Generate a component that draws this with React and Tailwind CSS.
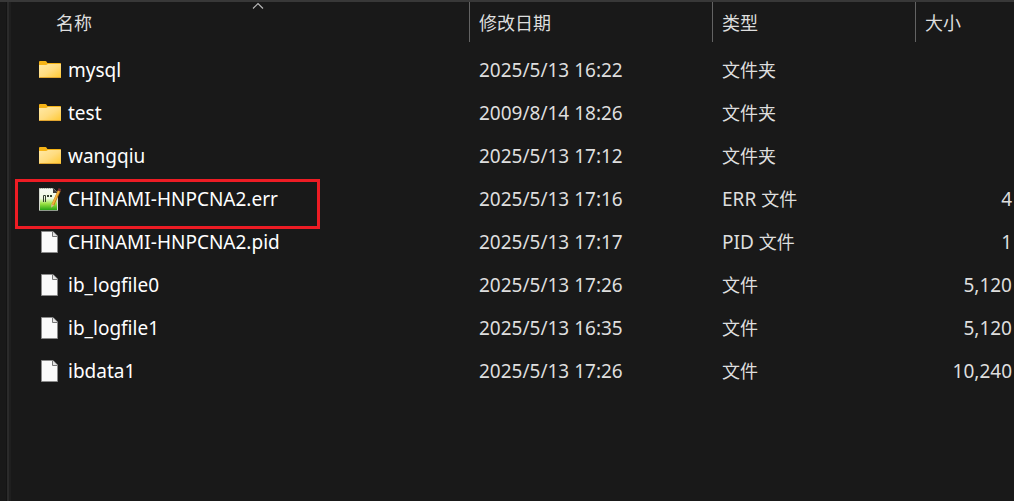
import React from 'react';

const files = [
  { name: 'mysql', icon: 'folder', date: '2025/5/13 16:22', kind: '', type: '文件夹', size: '' },
  { name: 'test', icon: 'folder', date: '2009/8/14 18:26', kind: '', type: '文件夹', size: '' },
  { name: 'wangqiu', icon: 'folder', date: '2025/5/13 17:12', kind: '', type: '文件夹', size: '' },
  { name: 'CHINAMI-HNPCNA2.err', icon: 'notepad', date: '2025/5/13 17:16', kind: 'ERR ', type: '文件', size: '4', marked: true },
  { name: 'CHINAMI-HNPCNA2.pid', icon: 'file', date: '2025/5/13 17:17', kind: 'PID ', type: '文件', size: '1' },
  { name: 'ib_logfile0', icon: 'file', date: '2025/5/13 17:26', kind: '', type: '文件', size: '5,120' },
  { name: 'ib_logfile1', icon: 'file', date: '2025/5/13 16:35', kind: '', type: '文件', size: '5,120' },
  { name: 'ibdata1', icon: 'file', date: '2025/5/13 17:26', kind: '', type: '文件', size: '10,240' },
];

function FolderIcon() {
  return (
    <svg width="24" height="26" viewBox="0 0 24 26" aria-hidden="true">
      <defs>
        <linearGradient id="folderFront" x1="0" y1="0" x2="1" y2="1">
          <stop offset="0" stopColor="#ffe9a6" />
          <stop offset="0.5" stopColor="#ffdc80" />
          <stop offset="1" stopColor="#ffc830" />
        </linearGradient>
      </defs>
      <path d="M1 4Q1 3 2 3H7.5Q8.2 3 8.6 3.8L9.4 5H22.4Q23 5 23 5.6V10H1Z" fill="#f5b316" />
      <path d="M1 7H7.6Q8.4 7 9 6.4Q9.4 6 10 6H23V19.4Q23 20 22.4 20H1.6Q1 20 1 19.4Z" fill="url(#folderFront)" />
      <path d="M1.3 19.5H22.7" stroke="#e0a530" strokeWidth="1" />
    </svg>
  );
}

function FileIcon() {
  return (
    <svg width="24" height="26" viewBox="0 0 24 26" aria-hidden="true">
      <path d="M3.5 1.5H15L19.5 6V22.5H3.5Z" fill="#fafafa" stroke="#8a8a8a" />
      <path d="M14.5 1.5V6.5H19.5" fill="#e4e4e4" stroke="#777" />
    </svg>
  );
}

function NotepadIcon() {
  return (
    <svg width="24" height="26" viewBox="0 0 24 26" aria-hidden="true">
      <defs>
        <linearGradient id="padPage" x1="0" y1="0" x2="0" y2="1">
          <stop offset="0" stopColor="#f8fbf4" />
          <stop offset="0.45" stopColor="#eefae0" />
          <stop offset="0.7" stopColor="#98e040" />
          <stop offset="1" stopColor="#1fa012" />
        </linearGradient>
      </defs>
      <path d="M1.5 1.5H15L19.5 6V23.5H1.5Z" fill="url(#padPage)" stroke="#d4d8d0" />
      <path d="M1 23.5H20" stroke="#8f9a8c" />
      <path d="M2 1.5H15" stroke="#a4aca0" strokeDasharray="1 1" />
      <path d="M15 1.5L20 6H15Z" fill="#3a3a3a" />
      <path d="M5.5 15V8.5H7.5V15" fill="none" stroke="#33402e" />
      <path d="M9 9H11M12 9H14" stroke="#33402e" strokeWidth="2" />
      <path d="M21.3 3.5L14.8 18" stroke="#c07a14" strokeWidth="3" />
      <path d="M21 3.5L14.6 17.6" stroke="#f2b440" strokeWidth="1.8" />
      <path d="M21 4L22 1.6" stroke="#7d3030" strokeWidth="2.8" />
      <path d="M13.3 17L16 18.4L13 20.8Z" fill="#d9b98a" />
    </svg>
  );
}

const icons = { folder: FolderIcon, file: FileIcon, notepad: NotepadIcon };

function HeaderCell({ children }) {
  return (
    <th scope="col" className="border-l border-[#636363] p-0 text-left font-normal">
      <button type="button" className="block h-10 w-full pt-[2px] pl-[9px] text-left">{children}</button>
    </th>
  );
}

export default function App() {
  return (
    <div className="flex min-h-screen overflow-hidden border-t-2 border-[#383838] bg-[#191919] font-['Noto_Sans','Noto_Sans_CJK_SC',sans-serif] text-[19px] text-[#dedede]">
      <div className="w-[7px] shrink-0 border-r border-[#141414]" />
      <div className="w-1 shrink-0 border-r-2 border-[#1f1f1f] bg-[#2b2b2b]" />
      <main className="min-w-0 flex-1">
        <table className="w-full table-fixed border-separate border-spacing-0">
          <colgroup>
            <col className="w-[458px]" />
            <col className="w-[243px]" />
            <col className="w-[203px]" />
            <col />
          </colgroup>
          <thead className="text-[18px]">
            <tr>
              <th scope="col" aria-sort="ascending" className="p-0 pl-9 text-left font-normal">
                <button type="button" className="relative block h-10 w-full pt-[2px] pl-[9px] text-left">
                  名称
                  <svg className="absolute top-0 left-1/2 -translate-x-1/2" width="12" height="8" viewBox="0 0 12 8" aria-hidden="true">
                    <path d="M1 6.5L6 1.5L11 6.5" fill="none" stroke="#b8b8b8" strokeWidth="1.2" />
                  </svg>
                </button>
              </th>
              <HeaderCell>修改日期</HeaderCell>
              <HeaderCell>类型</HeaderCell>
              <HeaderCell>大小</HeaderCell>
            </tr>
          </thead>
          <tbody className="before:block before:h-[7px] before:content-['']">
            {files.map((f) => {
              const Icon = icons[f.icon];
              return (
                <tr key={f.name} className="whitespace-nowrap">
                  <td className="relative h-[43px] p-0 pl-[27px] text-white">
                    <div className="flex items-center gap-[6px]">
                      <Icon />
                      <span>{f.name}</span>
                    </div>
                    {f.marked && (
                      <div className="pointer-events-none absolute top-[1px] left-1 h-[50px] w-[305px] border-3 border-[#ed1c24]" />
                    )}
                  </td>
                  <td className="p-0 pl-[10px]">{f.date}</td>
                  <td className="p-0 pl-[10px]">
                    {f.kind}
                    <span className="text-[18px]">{f.type}</span>
                  </td>
                  <td className="p-0 pr-[2px] text-right">{f.size}</td>
                </tr>
              );
            })}
          </tbody>
        </table>
      </main>
    </div>
  );
}
